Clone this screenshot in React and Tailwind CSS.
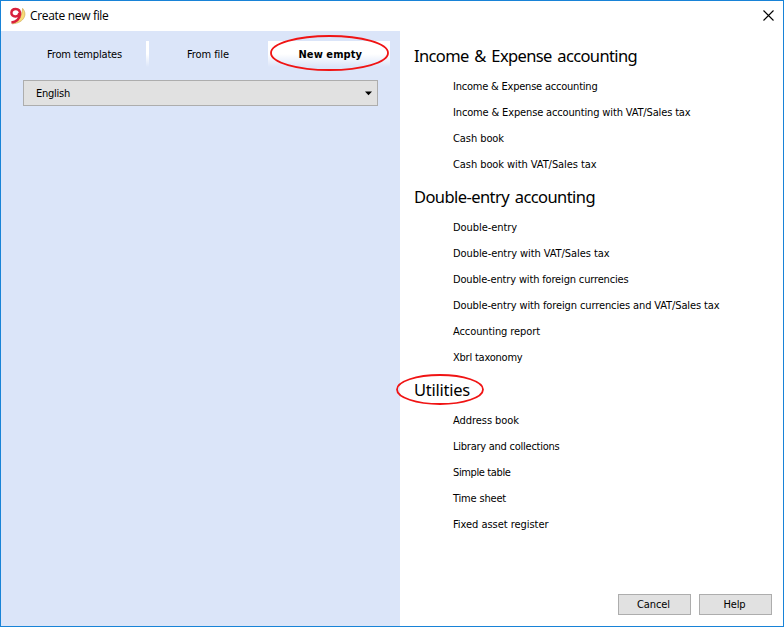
import { useLayoutEffect, useRef, useState } from "react";

// Text set to an exact width by spreading the difference over its letters.
function FitText({ width, className = "", children }) {
  const ref = useRef(null);
  const [spacing, setSpacing] = useState(0);
  useLayoutEffect(() => {
    const natural = ref.current.getBoundingClientRect().width;
    setSpacing((width - natural) / children.length);
  }, [width, children]);
  return (
    <span ref={ref} className={`whitespace-nowrap ${className}`} style={{ letterSpacing: spacing }}>
      {children}
    </span>
  );
}

const sections = [
  {
    title: "Income & Expense accounting",
    width: 223,
    items: [
      ["Income & Expense accounting", 144.5],
      ["Income & Expense accounting with VAT/Sales tax", 237.5],
      ["Cash book", 51],
      ["Cash book with VAT/Sales tax", 143.5],
    ],
  },
  {
    title: "Double-entry accounting",
    width: 181,
    items: [
      ["Double-entry", 64],
      ["Double-entry with VAT/Sales tax", 156.5],
      ["Double-entry with foreign currencies", 175.5],
      ["Double-entry with foreign currencies and VAT/Sales tax", 266.5],
      ["Accounting report", 87],
      ["Xbrl taxonomy", 69.5],
    ],
  },
  {
    title: "Utilities",
    width: 56,
    circled: true,
    items: [
      ["Address book", 66],
      ["Library and collections", 106.5],
      ["Simple table", 57.5],
      ["Time sheet", 53],
      ["Fixed asset register", 95.5],
    ],
  },
];

function Logo() {
  return (
    <svg className="ml-2 size-[18px]" viewBox="0 0 18 18" fill="none">
      <path d="M13.6 1.4C18.4 6.5 16 15.8 3.4 16.8C8.6 14.8 13.2 10 13.6 1.4Z" fill="#f8dc78" stroke="#cfa750" strokeWidth=".7" />
      <path
        d="M10.3 6C10.1 8.4 8.4 9.6 6.2 9.5C4 9.4 2.3 7.9 2.4 5.8C2.5 3.5 4.3 1.9 6.7 1.9C9.7 1.9 11.3 4 11 7.4C10.5 11.8 7.4 14.9 2.4 15.4"
        stroke="#d8203c"
        strokeWidth="2.5"
      />
    </svg>
  );
}

function Ellipse({ className, w, h }) {
  return (
    <svg className={`pointer-events-none absolute ${className}`} width={w} height={h} fill="none">
      <ellipse cx={w / 2} cy={h / 2} rx={w / 2 - 1} ry={h / 2 - 1} stroke="#f01414" strokeWidth="1.8" />
    </svg>
  );
}

export default function App() {
  return (
    <div className="flex h-[628px] w-[784px] flex-col bg-white text-black [font-family:'DejaVu_Sans_Condensed','DejaVu_Sans',sans-serif] [font-stretch:condensed]">
      <div className="flex h-[627px] flex-col border border-[#1883d7]">
        <header className="flex h-[30px] shrink-0 items-center">
          <Logo />
          <FitText width={78.5} className="ml-[3px] text-[12px] [font-family:'Open_Sans',sans-serif] [font-stretch:normal]">
            Create new file
          </FitText>
          <svg className="mr-[9.5px] mb-[1px] ml-auto size-[11px]" viewBox="0 0 11 11" stroke="#000" strokeWidth="1.1">
            <path d="M.5 .5l10 10M10.5 .5l-10 10" />
          </svg>
        </header>
        <div className="flex min-h-0 flex-1">
          <aside className="flex w-[399px] flex-col bg-[#dbe5f9] text-[11px]">
            <nav className="flex h-[49px] pt-[10px]">
              <div className="flex h-[26px] w-[145px] items-center pt-[2px] pl-[46px]">
                <FitText width={75}>From templates</FitText>
              </div>
              <div className="h-[26px] w-[3px] bg-linear-to-b from-white from-50% to-[#dbe5f9]" />
              <div className="flex h-[26px] w-[119px] items-center pt-[2px] pl-[38px]">
                <FitText width={42}>From file</FitText>
              </div>
              <div className="relative flex h-[26px] w-[122px] items-center bg-linear-to-b from-white from-50% to-[#dbe5f9] pt-[2px] pl-[30.5px]">
                <FitText width={63.5} className="font-bold">New empty</FitText>
                <Ellipse className="-top-[6px] left-[2px]" w={119} h={36} />
              </div>
            </nav>
            <div className="ml-[22px] flex h-[26px] w-[355px] items-center justify-between border border-[#adadad] bg-[#e1e1e1] pr-[5px] pl-[12px]">
              <FitText width={34} className="pt-[2px]">English</FitText>
              <svg className="size-[7px]" viewBox="0 0 7 7">
                <path d="M0 1.5h7L3.5 5.2z" />
              </svg>
            </div>
          </aside>
          <main className="flex flex-1 flex-col pt-[5px]">
            {sections.map((s) => (
              <section key={s.title}>
                <div className="h-[37px] pt-[3px] pl-[14px]">
                  <h2 className="relative flex h-[34px] items-center text-[16.5px] [font-family:'Noto_Sans',sans-serif] [font-stretch:normal] [word-spacing:2px]">
                    <FitText width={s.width}>{s.title}</FitText>
                    {s.circled && <Ellipse className="top-[1px] -left-[18px]" w={88} h={31} />}
                  </h2>
                </div>
                <ul className="pl-[53px] text-[11px]">
                  {s.items.map(([label, width]) => (
                    <li key={label} className="flex h-[26px] items-center pt-[2px]">
                      <FitText width={width}>{label}</FitText>
                    </li>
                  ))}
                </ul>
              </section>
            ))}
            <footer className="mt-auto mr-[11px] mb-[11px] flex justify-end gap-2 text-[11px]">
              <button className="flex h-[21px] w-[73px] items-center justify-center border border-[#adadad] bg-[#e1e1e1] pt-[2px] pr-[2px]">
                <FitText width={33}>Cancel</FitText>
              </button>
              <button className="flex h-[21px] w-[73px] items-center justify-center border border-[#adadad] bg-[#e1e1e1] pt-[2px] pr-[2px]">
                <FitText width={22}>Help</FitText>
              </button>
            </footer>
          </main>
        </div>
      </div>
    </div>
  );
}
